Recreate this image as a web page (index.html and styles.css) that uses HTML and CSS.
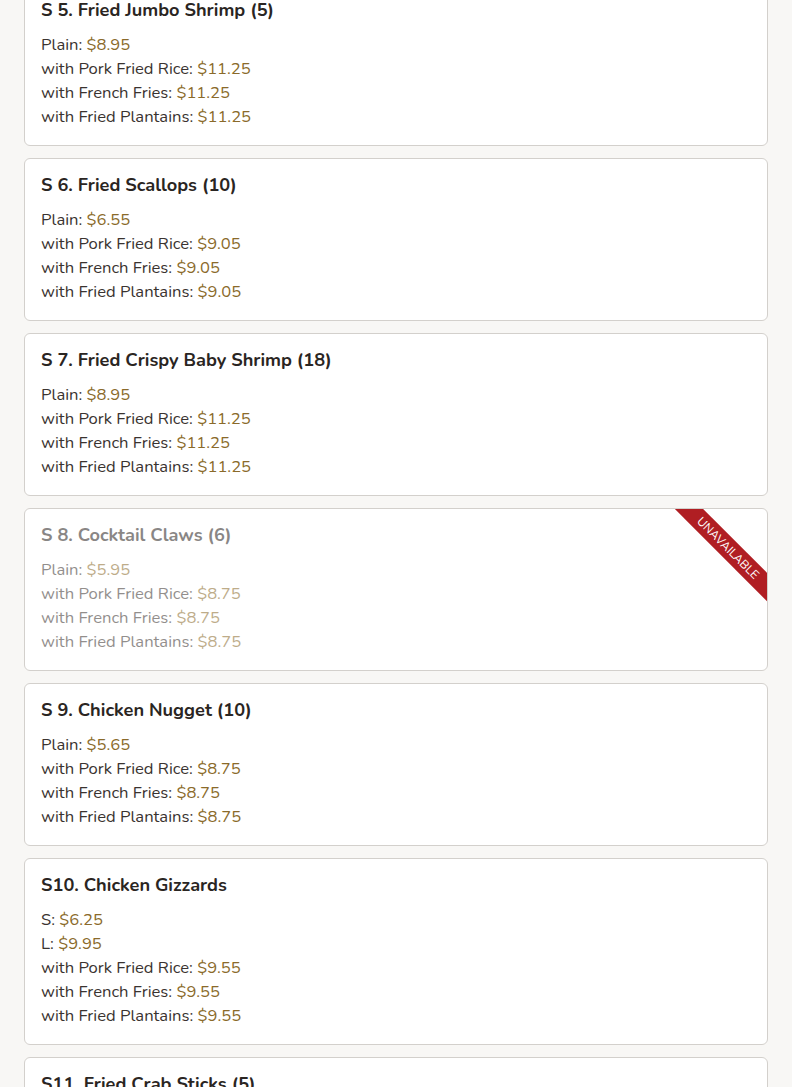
FILE: index.html
```html
<!DOCTYPE html>
<html>
<head>
<meta charset="utf-8">
<link rel="stylesheet" href="styles.css">
</head>
<body>
<div class="list">
  <div class="card">
    <h3 class="title">S 5. Fried Jumbo Shrimp (5)</h3>
    <ul class="prices">
      <li>Plain: <span class="p">$8.95</span></li>
      <li>with Pork Fried Rice: <span class="p">$11.25</span></li>
      <li>with French Fries: <span class="p">$11.25</span></li>
      <li>with Fried Plantains: <span class="p">$11.25</span></li>
    </ul>
  </div>
  <div class="card">
    <h3 class="title">S 6. Fried Scallops (10)</h3>
    <ul class="prices">
      <li>Plain: <span class="p">$6.55</span></li>
      <li>with Pork Fried Rice: <span class="p">$9.05</span></li>
      <li>with French Fries: <span class="p">$9.05</span></li>
      <li>with Fried Plantains: <span class="p">$9.05</span></li>
    </ul>
  </div>
  <div class="card">
    <h3 class="title">S 7. Fried Crispy Baby Shrimp (18)</h3>
    <ul class="prices">
      <li>Plain: <span class="p">$8.95</span></li>
      <li>with Pork Fried Rice: <span class="p">$11.25</span></li>
      <li>with French Fries: <span class="p">$11.25</span></li>
      <li>with Fried Plantains: <span class="p">$11.25</span></li>
    </ul>
  </div>
  <div class="card unavailable">
    <div class="content">
      <h3 class="title">S 8. Cocktail Claws (6)</h3>
      <ul class="prices">
        <li>Plain: <span class="p">$5.95</span></li>
        <li>with Pork Fried Rice: <span class="p">$8.75</span></li>
        <li>with French Fries: <span class="p">$8.75</span></li>
        <li>with Fried Plantains: <span class="p">$8.75</span></li>
      </ul>
    </div>
    <div class="ribbon">UNAVAILABLE</div>
  </div>
  <div class="card">
    <h3 class="title">S 9. Chicken Nugget (10)</h3>
    <ul class="prices">
      <li>Plain: <span class="p">$5.65</span></li>
      <li>with Pork Fried Rice: <span class="p">$8.75</span></li>
      <li>with French Fries: <span class="p">$8.75</span></li>
      <li>with Fried Plantains: <span class="p">$8.75</span></li>
    </ul>
  </div>
  <div class="card">
    <h3 class="title">S10. Chicken Gizzards</h3>
    <ul class="prices">
      <li>S: <span class="p">$6.25</span></li>
      <li>L: <span class="p">$9.95</span></li>
      <li>with Pork Fried Rice: <span class="p">$9.55</span></li>
      <li>with French Fries: <span class="p">$9.55</span></li>
      <li>with Fried Plantains: <span class="p">$9.55</span></li>
    </ul>
  </div>
  <div class="card">
    <h3 class="title">S11. Fried Crab Sticks (5)</h3>
    <ul class="prices">
      <li>Plain: <span class="p">$5.95</span></li>
      <li>with Pork Fried Rice: <span class="p">$8.75</span></li>
      <li>with French Fries: <span class="p">$8.75</span></li>
      <li>with Fried Plantains: <span class="p">$8.75</span></li>
    </ul>
  </div>
</div>
</body>
</html>
```
FILE: styles.css
```css
html, body {
  margin: 0;
  padding: 0;
  background: #f8f7f5;
  font-family: "Nunito", "Lato", "Open Sans", sans-serif;
  color: #3a3330;
}
.list {
  display: flex;
  flex-direction: column;
  gap: 12px;
  padding: 0 24px;
  margin-top: -17px;
}
.card {
  position: relative;
  overflow: hidden;
  background: #fff;
  border: 1px solid #d3d0cc;
  border-radius: 6px;
  padding: 16px;
}
.title {
  margin: 0 0 13px;
  font-size: 18.2px;
  line-height: 20px;
  font-weight: 700;
  color: #2a2522;
}
.prices {
  list-style: none;
  margin: 0;
  padding: 0;
  font-size: 16.6px;
  line-height: 24px;
}
.p {
  color: #8a6a2a;
}
.unavailable .content {
  opacity: 0.55;
}
.ribbon {
  position: absolute;
  top: 29px;
  right: -41px;
  width: 160px;
  height: 20px;
  line-height: 20px;
  background: #b01e23;
  color: #fff;
  font-size: 12px;
  font-weight: 400;
  text-align: center;
  transform: rotate(45deg);
}
```
